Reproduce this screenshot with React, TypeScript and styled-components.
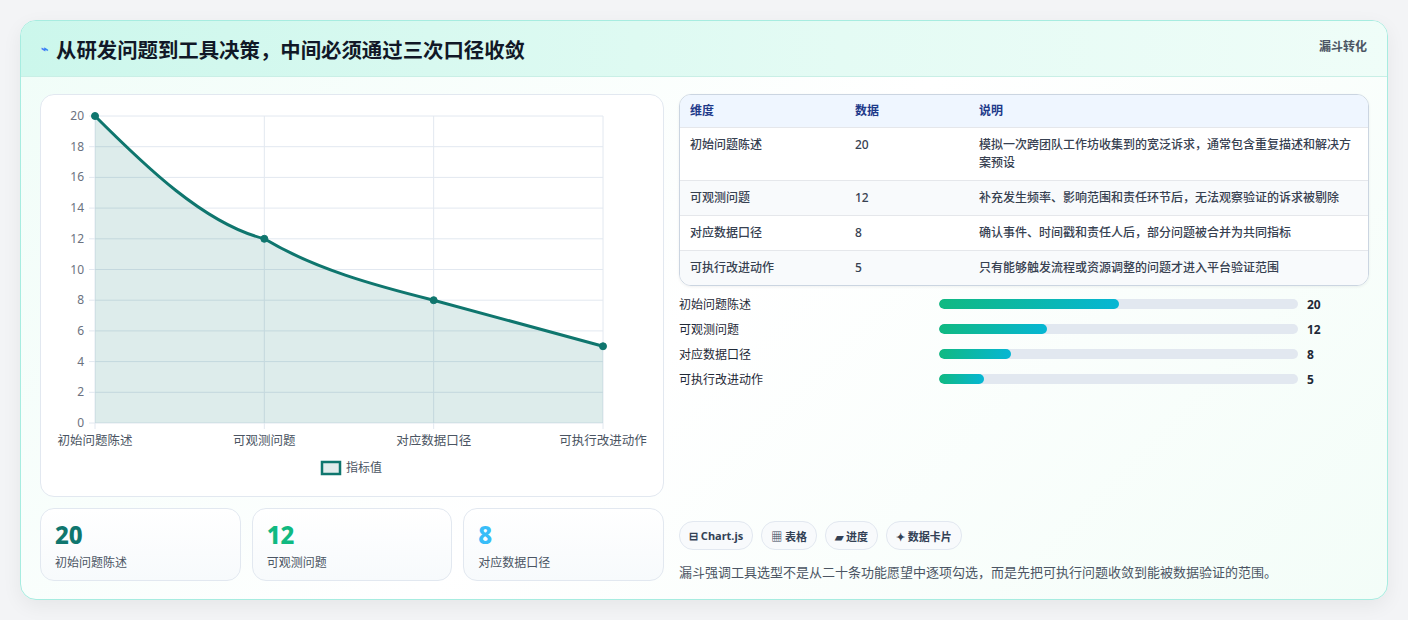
import React from 'react';
import styled, { createGlobalStyle } from 'styled-components';

const Global = createGlobalStyle`
  body { margin: 0; background: #f3f4f6; font-family: "Noto Sans", "Noto Sans CJK SC", sans-serif; color: #1f2937; }
`;

const Page = styled.div`
  padding: 20px;
  height: 620px;
  box-sizing: border-box;
`;

const Card = styled.div`
  width: 1368px;
  height: 580px;
  box-sizing: border-box;
  border: 1px solid #a7ece0;
  border-radius: 16px;
  background: linear-gradient(135deg, #f0fdf8 0%, #ffffff 50%, #f3fdf8 100%);
  box-shadow: 0 6px 20px rgba(0,0,0,0.06);
  overflow: hidden;
  display: flex;
  flex-direction: column;
`;

const Header = styled.div`
  height: 55px;
  flex-shrink: 0;
  display: flex;
  align-items: center;
  justify-content: space-between;
  padding: 0 20px;
  background: linear-gradient(90deg, #ccf7ec 0%, #e4fbf4 60%, #effdf8 100%);
  border-bottom: 1px solid #c9efe6;
`;

const Title = styled.h1`
  margin: 0;
  font-size: 20.4px;
  font-weight: 700;
  color: #111827;
  display: flex;
  align-items: center;
  gap: 8px;
`;

const Tag = styled.span`
  align-self: flex-start;
  margin-top: 16px;
  font-size: 12px;
  font-weight: 700;
  color: #4b5563;
`;

const Body = styled.div`
  flex: 1;
  display: grid;
  grid-template-columns: 624px 690px;
  gap: 15px;
  padding: 17px 19px 19px 19px;
`;

const LeftCol = styled.div`
  display: flex;
  flex-direction: column;
  gap: 11px;
`;

const ChartCard = styled.div`
  height: 403px;
  box-sizing: border-box;
  background: #fff;
  border: 1px solid #e2e8f0;
  border-radius: 14px;
`;

const Stats = styled.div`
  display: grid;
  grid-template-columns: repeat(3, 1fr);
  gap: 11px;
`;

const Stat = styled.div`
  height: 73px;
  box-sizing: border-box;
  border: 1px solid #e2e8f0;
  border-radius: 14px;
  background: linear-gradient(180deg, #ffffff, #f7fafc);
  padding: 12px 14px;
`;

const StatNum = styled.div<{ $c: string }>`
  font-size: 24px;
  font-weight: 800;
  color: ${p => p.$c};
  line-height: 28px;
`;

const StatLabel = styled.div`
  font-size: 12px;
  color: #4b5563;
  margin-top: 4px;
`;

const RightCol = styled.div`
  display: flex;
  flex-direction: column;
`;

const Table = styled.div`
  border: 1px solid #cbd5e1;
  border-radius: 12px;
  overflow: hidden;
  box-shadow: 0 1px 3px rgba(0,0,0,0.06);
  font-size: 12px;
`;

const Row = styled.div<{ $head?: boolean; $alt?: boolean }>`
  display: grid;
  grid-template-columns: 165px 124px 1fr;
  padding: ${p => (p.$head ? '7px 10px' : '8px 10px')};
  background: ${p => (p.$head ? '#eff6ff' : p.$alt ? '#f8fafc' : '#ffffff')};
  color: ${p => (p.$head ? '#1e3a8a' : '#374151')};
  font-weight: ${p => (p.$head ? 600 : 500)};
  line-height: 18px;
  border-top: ${p => (p.$head ? 'none' : '1px solid #e5e7eb')};
`;

const Bars = styled.div`
  display: flex;
  flex-direction: column;
  gap: 7px;
  margin-top: 9px;
`;

const BarRow = styled.div`
  display: grid;
  grid-template-columns: 260px 359px 1fr;
  align-items: center;
  font-size: 12px;
  color: #1f2937;
  height: 18px;
`;

const Track = styled.div`
  height: 10px;
  border-radius: 5px;
  background: #e2e8f0;
  overflow: hidden;
`;

const Fill = styled.div`
  height: 100%;
  border-radius: 5px;
  background: linear-gradient(90deg, #10b981, #06b6d4);
`;

const BarVal = styled.span`
  padding-left: 9px;
  font-weight: 700;
`;

const Footer = styled.div`
  margin-top: auto;
`;

const Chips = styled.div`
  display: flex;
  gap: 8px;
`;

const Chip = styled.span`
  display: inline-flex;
  align-items: center;
  gap: 4px;
  height: 27px;
  padding: 0 9px;
  border: 1px solid #e2e8f0;
  border-radius: 14px;
  background: #f8fafc;
  font-size: 11px;
  font-weight: 700;
  color: #334155;
`;

const Note = styled.p`
  margin: 12px 0 0;
  font-size: 13px;
  color: #4b5563;
`;

const data = [
  { k: '初始问题陈述', v: 20, d: '模拟一次跨团队工作坊收集到的宽泛诉求，通常包含重复描述和解决方案预设' },
  { k: '可观测问题', v: 12, d: '补充发生频率、影响范围和责任环节后，无法观察验证的诉求被剔除' },
  { k: '对应数据口径', v: 8, d: '确认事件、时间戳和责任人后，部分问题被合并为共同指标' },
  { k: '可执行改进动作', v: 5, d: '只有能够触发流程或资源调整的问题才进入平台验证范围' },
];

function Chart() {
  const x0 = 54, x1 = 562, y0 = 21, y1 = 328;
  const xs = data.map((_, i) => x0 + (i * (x1 - x0)) / 3);
  const y = (v: number) => y1 - (v / 20) * (y1 - y0);
  const pts = data.map((d, i) => [xs[i], y(d.v)]);
  const path = `M${pts[0][0]},${pts[0][1]} C${pts[0][0] + 50},${pts[0][1] + 50} ${pts[1][0] - 60},${pts[1][1] - 15} ${pts[1][0]},${pts[1][1]} C${pts[1][0] + 50},${pts[1][1] + 30} ${pts[2][0] - 60},${pts[2][1] - 15} ${pts[2][0]},${pts[2][1]} L${pts[3][0]},${pts[3][1]}`;
  return (
    <svg width="622" height="401" style={{ display: 'block' }}>
      {Array.from({ length: 11 }, (_, i) => {
        const yy = y(i * 2);
        return (
          <g key={i}>
            <line x1={x0 - 6} x2={x1} y1={yy} y2={yy} stroke="#e2e8f0" />
            <text x={x0 - 11} y={yy + 4} textAnchor="end" fontSize="12" fill="#6b7280">{i * 2}</text>
          </g>
        );
      })}
      {xs.map((xx, i) => (
        <g key={i}>
          <line x1={xx} x2={xx} y1={y0} y2={y1 + 6} stroke="#e2e8f0" />
          <text x={xx} y={y1 + 22} textAnchor="middle" fontSize="12.5" fill="#4b5563">{data[i].k}</text>
        </g>
      ))}
      <path d={`${path} L${x1},${y1} L${x0},${y1} Z`} fill="rgba(15,118,110,0.14)" />
      <path d={path} fill="none" stroke="#0f766e" strokeWidth="3" />
      {pts.map((p, i) => (
        <circle key={i} cx={p[0]} cy={p[1]} r="3.5" fill="#0f766e" stroke="#0f766e" />
      ))}
      <rect x="281" y="367" width="18" height="12" fill="#e2ecec" stroke="#0f766e" strokeWidth="2.5" />
      <text x="305" y="377" fontSize="12" fill="#4b5563">指标值</text>
    </svg>
  );
}

export default function App() {
  return (
    <>
      <Global />
      <Page>
        <Card>
          <Header>
            <Title><span style={{ color: '#3b82f6', fontSize: 12 }}>⌁</span>从研发问题到工具决策，中间必须通过三次口径收敛</Title>
            <Tag>漏斗转化</Tag>
          </Header>
          <Body>
            <LeftCol>
              <ChartCard><Chart /></ChartCard>
              <Stats>
                <Stat><StatNum $c="#0f766e">20</StatNum><StatLabel>初始问题陈述</StatLabel></Stat>
                <Stat><StatNum $c="#10b981">12</StatNum><StatLabel>可观测问题</StatLabel></Stat>
                <Stat><StatNum $c="#38bdf8">8</StatNum><StatLabel>对应数据口径</StatLabel></Stat>
              </Stats>
            </LeftCol>
            <RightCol>
              <Table>
                <Row $head><span>维度</span><span>数据</span><span>说明</span></Row>
                {data.map((d, i) => (
                  <Row key={d.k} $alt={i % 2 === 1}><span>{d.k}</span><span>{d.v}</span><span>{d.d}</span></Row>
                ))}
              </Table>
              <Bars>
                {data.map(d => (
                  <BarRow key={d.k}>
                    <span>{d.k}</span>
                    <Track><Fill style={{ width: `${(d.v / 40) * 100}%` }} /></Track>
                    <BarVal>{d.v}</BarVal>
                  </BarRow>
                ))}
              </Bars>
              <Footer>
                <Chips>
                  <Chip>⊟ Chart.js</Chip>
                  <Chip>▦ 表格</Chip>
                  <Chip>▰ 进度</Chip>
                  <Chip>✦ 数据卡片</Chip>
                </Chips>
                <Note>漏斗强调工具选型不是从二十条功能愿望中逐项勾选，而是先把可执行问题收敛到能被数据验证的范围。</Note>
              </Footer>
            </RightCol>
          </Body>
        </Card>
      </Page>
    </>
  );
}
